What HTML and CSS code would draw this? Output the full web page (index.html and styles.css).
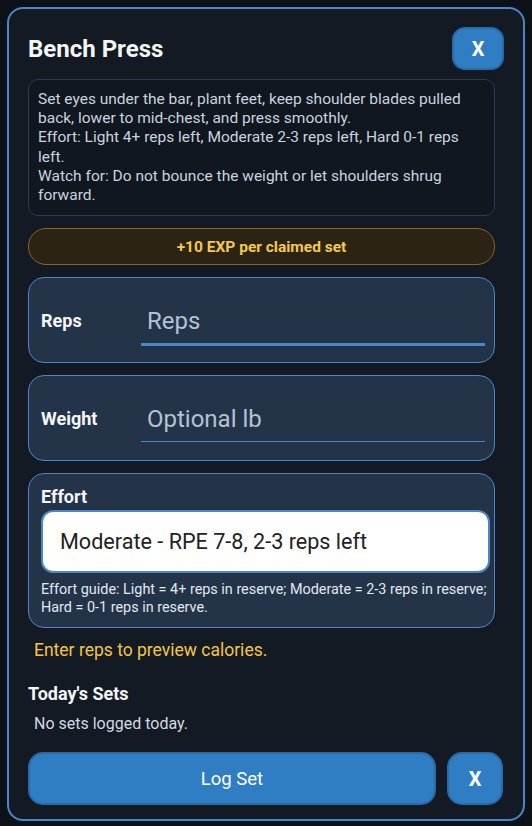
FILE: index.html
```html
<!DOCTYPE html>
<html lang="en">
<head>
    <meta charset="UTF-8">
    <meta name="viewport" content="width=device-width, initial-scale=1.0">
    <title>Bench Press</title>
    <link rel="stylesheet" href="styles.css">
</head>
<body>
    <div class="modal">
        <div class="modal-header">
            <h2>Bench Press</h2>
            <button class="btn btn-close">X</button>
        </div>

        <div class="cue-box">
            <div>Set eyes under the bar, plant feet, keep shoulder blades pulled back, lower to mid-chest, and press smoothly.</div>
            <div>Effort: Light 4+ reps left, Moderate 2-3 reps left, Hard 0-1 reps<br>left.</div>
            <div>Watch for: Do not bounce the weight or let shoulders shrug forward.</div>
        </div>

        <div class="exp-pill">+10 EXP per claimed set</div>

        <div class="field-card field-row">
            <label for="reps">Reps</label>
            <input type="text" id="reps" class="line-input focused" placeholder="Reps">
        </div>

        <div class="field-card field-row">
            <label for="weight">Weight</label>
            <input type="text" id="weight" class="line-input" placeholder="Optional lb">
        </div>

        <div class="field-card effort-card">
            <label for="effort">Effort</label>
            <select id="effort" class="effort-select">
                <option>Moderate - RPE 7-8, 2-3 reps left</option>
                <option>Light - RPE 5-6, 4+ reps left</option>
                <option>Hard - RPE 9-10, 0-1 reps left</option>
            </select>
            <p class="effort-guide">Effort guide: Light = 4+ reps in reserve; Moderate = 2-3 reps in reserve; Hard = 0-1 reps in reserve.</p>
        </div>

        <p class="calorie-hint">Enter reps to preview calories.</p>

        <h3 class="sets-title">Today's Sets</h3>
        <p class="sets-empty">No sets logged today.</p>

        <div class="modal-footer">
            <button class="btn btn-log">Log Set</button>
            <button class="btn btn-close btn-close-bottom">X</button>
        </div>
    </div>
</body>
</html>
```

FILE: styles.css
```css
body {
    font-family: Roboto, "Noto Sans", Arial, sans-serif;
    margin: 0;
    background-color: #0d1218;
    color: #f1f4f8;
}
.modal {
    box-sizing: border-box;
    width: 518px;
    height: 814px;
    margin: 7px;
    padding: 18px 19px 14px 19px;
    background-color: #131a23;
    border: 2px solid #4a86c8;
    border-radius: 16px;
    display: flex;
    flex-direction: column;
}
.modal-header {
    display: flex;
    justify-content: space-between;
    align-items: center;
}
.modal-header h2 {
    margin: 0;
    font-size: 24px;
    font-weight: 700;
    color: #f4f6f9;
}
.btn {
    font-family: Roboto, "Noto Sans", Arial, sans-serif;
    color: #fff;
    background-color: #2f7ec4;
    border: 2px solid #2a6aa6;
    cursor: pointer;
}
.btn-close {
    width: 52px;
    height: 43px;
    border-radius: 13px;
    font-size: 20px;
    font-weight: 700;
}
.cue-box {
    margin: 9px 9px 0 0;
    padding: 10px 9px;
    background-color: #10171f;
    border: 1px solid #2c3b4f;
    border-radius: 10px;
    font-size: 15.5px;
    line-height: 19.2px;
    color: #c9d3df;
}
.exp-pill {
    margin: 12px 9px 0 0;
    height: 37px;
    box-sizing: border-box;
    display: flex;
    align-items: center;
    justify-content: center;
    background-color: #2b2314;
    border: 1px solid #8c6622;
    border-radius: 18px;
    font-size: 15.5px;
    font-weight: 700;
    color: #f6c94c;
}
.field-card {
    box-sizing: border-box;
    margin: 12px 9px 0 0;
    background-color: #233449;
    border: 1.5px solid #4a86c8;
    border-radius: 16px;
}
.field-card label {
    font-size: 18px;
    font-weight: 700;
    color: #f4f6f9;
}
.field-row {
    height: 86px;
    display: flex;
    align-items: center;
    padding: 0 9px 0 12px;
}
.field-row label {
    width: 100px;
    flex-shrink: 0;
}
.line-input {
    flex: 1;
    min-width: 0;
    height: 44px;
    margin-top: 2px;
    padding: 0 6px;
    background: transparent;
    border: none;
    border-bottom: 1px solid #4a86c8;
    font-family: Roboto, "Noto Sans", Arial, sans-serif;
    font-size: 24px;
    color: #f1f4f8;
    outline: none;
}
.line-input.focused {
    border-bottom-width: 3px;
    margin-top: 4px;
}
.line-input::placeholder {
    color: #b3c2d4;
}
.effort-card {
    padding: 10px 4px 10px 12px;
}
.effort-card label {
    display: block;
    line-height: 25px;
}
.effort-select {
    appearance: none;
    -webkit-appearance: none;
    display: block;
    width: 100%;
    height: 63px;
    margin-top: 1px;
    padding: 0 17px;
    background-color: #fff;
    border: 2px solid #4a86c8;
    border-radius: 12px;
    font-family: Roboto, "Noto Sans", Arial, sans-serif;
    font-size: 21.6px;
    color: #222;
    outline: none;
}
.effort-guide {
    margin: 8px 0 0 0;
    font-size: 14.4px;
    line-height: 18px;
    color: #e2e8ef;
}
.calorie-hint {
    margin: 11px 0 0 6px;
    font-size: 17.5px;
    line-height: 22px;
    color: #f5c644;
}
.sets-title {
    margin: 21px 0 0 0;
    font-size: 18px;
    line-height: 24px;
    font-weight: 700;
    color: #f4f6f9;
}
.sets-empty {
    margin: 8px 0 0 6px;
    font-size: 16px;
    line-height: 20px;
    color: #d2d9e2;
}
.modal-footer {
    display: flex;
    gap: 11px;
    margin-top: auto;
    padding-right: 1px;
}
.btn-log {
    flex: 1;
    height: 53px;
    border-radius: 15px;
    font-size: 18.5px;
}
.btn-close-bottom {
    width: 56px;
    height: 53px;
    border-radius: 15px;
}
```
